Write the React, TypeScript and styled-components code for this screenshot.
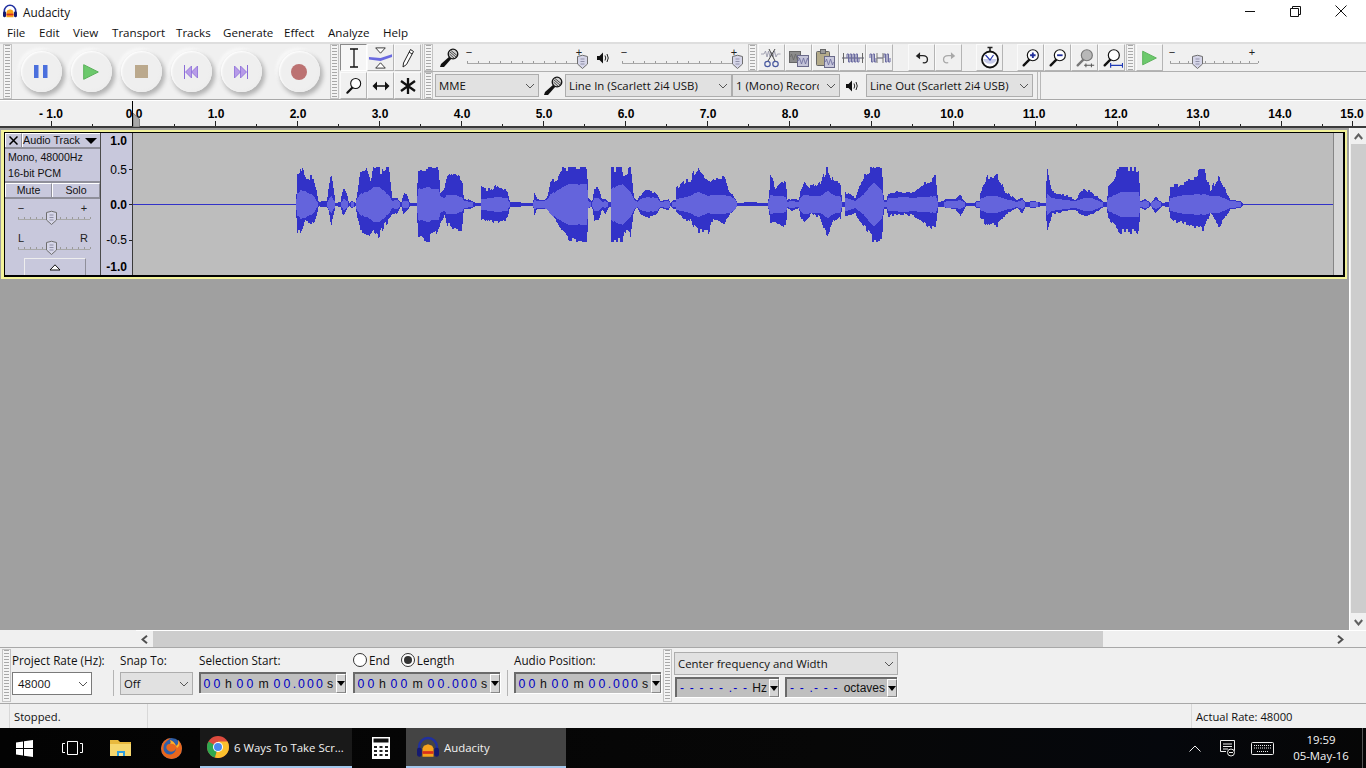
import React from "react";
import styled, { createGlobalStyle } from "styled-components";

const ui = `"Open Sans", "Noto Sans", sans-serif`;
const arial = `"Liberation Sans", Arial, sans-serif`;

const Global = createGlobalStyle`
  html, body { margin: 0; padding: 0; width: 1366px; height: 768px; overflow: hidden; background: #f0f0f0; }
  * { box-sizing: border-box; }
`;

const Page = styled.div`
  width: 1366px; height: 768px; display: flex; flex-direction: column;
  font-family: ${ui}; font-size: 11.4px; color: #111; background: #f0f0f0; overflow: hidden;
`;

/* ---------- title and menu ---------- */
const TitleBar = styled.div`
  height: 22px; flex: none; background: #fff; display: flex; align-items: center; padding-left: 3px;
`;
const TitleText = styled.span`
  margin-left: 6px; font-size: 11.8px; color: #111; margin-top: 1px;
`;
const WinControls = styled.div`
  margin-left: auto; display: flex; height: 22px; align-items: center; padding-right: 19px; gap: 34px;
`;
const MenuBar = styled.div`
  height: 20px; flex: none; background: #fff; display: flex; align-items: center; padding-left: 7px;
`;
const MenuItem = styled.span<{ $w: number }>`
  width: ${p => p.$w}px; font-size: 11.6px; white-space: nowrap;
`;

/* ---------- toolbars ---------- */
const Dock = styled.div`
  height: 58px; flex: none; display: flex; background: #f0f0f0;
  border-top: 2px solid #dedede; border-bottom: 1px solid #a8a8a8;
`;
const Grip = styled.div`
  flex: none; width: 9px; height: 100%; border: 1px solid #c4c4c4; background-color: #f4f4f4;
  background-image: repeating-linear-gradient(to bottom, #a8a8a8 0 1px, transparent 1px 3px);
  background-size: 5px 100%; background-repeat: no-repeat; background-position: center;
`;
const Transport = styled.div`
  flex: none; width: 312px; display: flex; align-items: center; padding-left: 3px; height: 100%;
`;
const RoundCell = styled.div<{ $gap?: number }>`
  width: 50px; height: 50px; flex: none; margin-left: ${p => p.$gap ?? 0}px; display: flex; align-items: center; justify-content: center;
`;
const RoundButton = styled.div`
  width: 41px; height: 41px; border-radius: 50%; background: radial-gradient(circle at 45% 45%, #efefef 60%, #e8e8e8 100%);
  box-shadow: 2px 3px 4px 1px #b4b4b4, -2px -2px 3px 1px #f9f9f9, inset 1px 1px 2px #fff;
  display: flex; align-items: center; justify-content: center;
`;
const ToolSection = styled.div`
  flex: none; display: flex; height: 100%; margin-left: 6px;
`;
const ToolGrid = styled.div`
  margin-left: 1px; width: 83px; display: grid; grid-template-columns: repeat(3, 27px); grid-auto-rows: 27px; gap: 1px 0; align-content: start;
  border-right: 1px solid #c8c8c8;
`;
const IconBtn = styled.div<{ $down?: boolean }>`
  width: 27px; height: 27px; flex: none; display: flex; align-items: center; justify-content: center;
  background: ${p => (p.$down ? "#f6f6f6" : "#f0f0f0")};
  border-top: 1px solid ${p => (p.$down ? "#8a8a8a" : "#fafafa")};
  border-left: 1px solid ${p => (p.$down ? "#8a8a8a" : "#fafafa")};
  border-right: 1px solid ${p => (p.$down ? "#fff" : "#b4b4b4")};
  border-bottom: 1px solid ${p => (p.$down ? "#fff" : "#b4b4b4")};
`;
const Rows = styled.div`
  flex: 1; display: flex; flex-direction: column; margin-left: 1px;
`;
const Row = styled.div<{ $line?: boolean }>`
  height: ${p => (p.$line ? 28 : 27)}px; flex: none; display: flex; align-items: center;
  border-bottom: ${p => (p.$line ? "1px solid #b0b0b0" : "none")};
`;
const Gap = styled.div<{ $w: number }>`
  width: ${p => p.$w}px; flex: none;
`;
const Combo = styled.div<{ $w: number; $h?: number; $white?: boolean }>`
  width: ${p => p.$w}px; height: ${p => p.$h ?? 23}px; flex: none; display: flex; align-items: center; position: relative;
  padding: 0 16px 0 3px; background: ${p => (p.$white ? "#fff" : "#e1e1e1")};
  border: 1px solid ${p => (p.$white ? "#7a7a7a" : "#adadad")}; font-size: 11.4px;
  overflow: hidden; white-space: nowrap;
`;
const ComboArrow = styled.div`
  position: absolute; right: 0; top: 0; bottom: 0; width: 20px; padding-left: 3px; display: flex; align-items: center; justify-content: center;
  background: inherit;
`;
const DoubleBar = styled.div`
  width: 4px; height: 27px; flex: none; border-left: 1px solid #b8b8b8; border-right: 1px solid #b8b8b8;
`;

/* ---------- ruler ---------- */
const Ruler = styled.div`
  height: 28px; flex: none; position: relative; background: #f0f0f0; border-top: 1px solid #fff; border-bottom: 2px solid #3a3a3a;
`;
const RulerLabel = styled.span`
  position: absolute; top: 6px; transform: translateX(-50%); font: bold 12px ${arial}; color: #000; white-space: nowrap;
`;
const Tick = styled.i<{ $major?: boolean }>`
  position: absolute; bottom: 0; width: 1px; height: ${p => (p.$major ? 5 : 2)}px; background: #222;
`;
const PlayLine = styled.i`
  position: absolute; left: 132px; top: 0; bottom: 0; width: 1px; background: #000;
`;
const PlayMark = styled.svg`
  position: absolute; left: 133px; top: 12px;
`;

/* ---------- track ---------- */
const Workspace = styled.div`
  flex: 1; min-height: 0; display: flex; background: #a0a0a0;
`;
const TrackLane = styled.div`
  flex: 1; padding: 2px 0 0 1px;
`;
const TrackFrame = styled.div`
  width: 1346px; height: 149px; background: #f3f39a; padding: 2px 2px 2px 3px;
`;
const TrackInner = styled.div`
  height: 100%; display: flex; border: solid #000; border-width: 1px 2px 2px 1px; background: #bdbdbd;
`;
const TrackPanel = styled.div`
  width: 96px; flex: none; display: flex; flex-direction: column; background: #c8c8dc; font: 11px ${arial}; color: #111;
  border-right: 1px solid #4a4a4a;
`;
const PanelHeader = styled.div`
  height: 16px; flex: none; display: flex; border-bottom: 2px solid #8f8f9a;
`;
const CloseBox = styled.div`
  width: 17px; flex: none; display: flex; align-items: center; justify-content: center; border-right: 1px solid #8f8f9a;
  border-left: 1px solid #fff; border-top: 1px solid #fff;
`;
const TrackName = styled.div`
  flex: 1; display: flex; align-items: center; padding-bottom: 2px; font-size: 10.8px; border-top: 1px solid #fff; border-left: 1px solid #fff;
`;
const Caret = styled.div`
  margin: 2px 3px 0 auto; width: 0; height: 0;
  border-left: 6px solid transparent; border-right: 6px solid transparent; border-top: 6px solid #000;
`;
const PanelInfo = styled.div`
  height: 34px; flex: none; padding: 0 0 0 3px; line-height: 16px; border-bottom: 2px solid #8f8f9a;
  font-size: 10.6px;
`;
const MuteRow = styled.div`
  height: 16px; flex: none; display: flex; border-bottom: 2px solid #8f8f9a;
`;
const MuteBtn = styled.div<{ $w: number }>`
  width: ${p => p.$w}px; flex: none; display: flex; align-items: center; justify-content: center; font-size: 10.6px; padding-bottom: 1px;
  border-left: 1px solid #fff; border-top: 1px solid #fff; border-right: 1px solid #8f8f9a;
`;
const SliderStack = styled.div`
  flex: 1; min-height: 0; display: flex; flex-direction: column; align-items: flex-start; padding-left: 10px; padding-top: 4px; gap: 6px;
`;
const Collapse = styled.div`
  margin: -5px 0 0 9px; width: 62px; height: 17px; flex: none; display: flex; align-items: center; justify-content: center;
  border: 1px solid #eee; border-bottom: 0; border-right-color: #8f8f9a;
`;
const VRuler = styled.div`
  width: 32px; flex: none; position: relative; background: #c8c8dc; border-right: 1px solid #3a3a3a; font: 12px ${arial}; color: #000;
`;
const VLabel = styled.span<{ $y: number; $bold?: boolean }>`
  position: absolute; right: 5px; top: ${p => p.$y}px; line-height: 14px; font-weight: ${p => (p.$bold ? 700 : 400)};
  font-size: 12px;
`;
const VTick = styled.i<{ $y: number }>`
  position: absolute; right: 0; top: ${p => p.$y}px; width: 3px; height: 1px; background: #222;
`;
const WaveBox = styled.div`
  flex: 1; position: relative; background: #bdbdbd;
`;
const WaveSvg = styled.svg`
  position: absolute; left: 0; top: 0; display: block;
`;
const EndStrip = styled.div`
  width: 10px; flex: none; background: #d6d6d6; border-left: 1px solid #858585;
`;

const VScroll = styled.div`
  width: 17px; flex: none; background: #f0f0f0; border-left: 1px solid #fff; display: flex; flex-direction: column; align-items: center;
`;
const VArrow = styled.div`
  height: 16px; flex: none; width: 100%; display: flex; align-items: center; justify-content: center;
`;
const VThumb = styled.div`
  width: 15px; height: 469px; flex: none; background: #cdcdcd;
`;
const VSpace = styled.div`
  flex: 1;
`;

const HScrollRow = styled.div`
  height: 17px; flex: none; display: flex; background: #f0f0f0; border-top: 1px solid #f0f0f0;
`;
const HLeft = styled.div`
  width: 136px; flex: none; background: #f0f0f0;
`;
const HBar = styled.div`
  flex: 1; display: flex; align-items: center; border-top: 1px solid #fff; margin-top: -1px; height: 17px;
`;
const HArrow = styled.div`
  width: 17px; flex: none; height: 100%; display: flex; align-items: center; justify-content: center;
`;
const HThumb = styled.div`
  width: 950px; height: 100%; background: #cdcdcd;
`;

/* ---------- selection bar ---------- */
const SelectionBar = styled.div`
  height: 57px; flex: none; display: flex; align-items: stretch; background: #f0f0f0;
  border-top: 1px solid #a8a8a8; border-bottom: 1px solid #a8a8a8; padding: 1px 0 1px 2px;
`;
const FieldGroup = styled.div<{ $w: number; $gap?: number }>`
  width: ${p => p.$w}px; flex: none; margin-left: ${p => p.$gap ?? 0}px; display: flex; flex-direction: column;
`;
const FieldLabel = styled.div`
  height: 23px; flex: none; display: flex; align-items: center; font-size: 11.7px; white-space: nowrap; padding-bottom: 1px;
`;
const VSep = styled.div`
  width: 1px; height: 26px; flex: none; background: #b4b4b4; align-self: flex-end; margin-bottom: 6px;
`;
const RadioLine = styled.div`
  height: 23px; flex: none; display: flex; align-items: center; padding-bottom: 1px; font-size: 11.7px;
`;
const Radio = styled.span<{ $on?: boolean }>`
  width: 14px; height: 14px; border: 1px solid #333; border-radius: 50%; background: #fff; display: inline-flex; align-items: center; justify-content: center;
  margin-right: 2px; &::after { content: ""; width: 8px; height: 8px; border-radius: 50%; background: ${p => (p.$on ? "#333" : "transparent")}; }
`;
const TimeBox = styled.div<{ $w: number; $h?: number }>`
  width: ${p => p.$w}px; height: ${p => p.$h ?? 21}px; flex: none; display: flex; align-items: center; background: #bfbfbf;
  border: solid; border-width: 2px 0 0 2px; border-color: #6a6a6a; box-shadow: 1px 1px 0 #fff; padding-left: 1px;
  font: 12px ${arial}; overflow: hidden;
`;
const TimeCell = styled.span<{ $w: number; $blue?: boolean }>`
  width: ${p => p.$w}px; flex: none; text-align: center; white-space: nowrap; color: ${p => (p.$blue ? "#0000c4" : "#111")}; font-size: 12.3px;
`;
const DashCell = styled.span<{ $w: number }>`
  width: ${p => p.$w}px; flex: none; padding-left: 2px; white-space: nowrap; color: #0000c4; font-size: 12px; letter-spacing: 1.200px;
`;
const TimeUnit = styled.span`
  margin-left: auto; margin-right: 2px; color: #111; font-size: 12px;
`;
const TimeDrop = styled.div`
  width: 10px; align-self: stretch; flex: none; background: #d4d4d4; border: 1px solid #8a8a8a; border-right-color: #777; border-top-color: #fff; border-left-color: #fff;
  display: flex; align-items: center; justify-content: center;
  &::after { content: ""; border-left: 4px solid transparent; border-right: 4px solid transparent; border-top: 5px solid #000; }
`;
const SpectralCol = styled.div`
  width: 226px; flex: none; margin-left: 2px; display: flex; flex-direction: column; padding-top: 3px; gap: 2px;
`;
const SpectralRow = styled.div`
  display: flex; padding-left: 1px; gap: 6px;
`;

/* ---------- status ---------- */
const StatusBar = styled.div`
  height: 24px; flex: none; display: flex; align-items: center; background: #f0f0f0; font-size: 11.2px;
`;
const StatusCell = styled.div<{ $w?: number; $line?: boolean }>`
  width: ${p => (p.$w ? p.$w + "px" : "auto")}; flex: ${p => (p.$w ? "none" : "1")}; height: 100%; display: flex; align-items: center; padding-left: 4px;
  border-left: ${p => (p.$line ? "1px solid #d8d8d8" : "none")};
`;

/* ---------- taskbar ---------- */
const Taskbar = styled.div`
  height: 40px; flex: none; display: flex; color: #fff;
  background: linear-gradient(90deg, #030303 0%, #070707 60%, #05070c 85%, #060606 100%);
`;
const TaskCell = styled.div<{ $w: number; $active?: boolean; $open?: boolean; $gap?: number }>`
  width: ${p => p.$w}px; flex: none; margin-left: ${p => p.$gap ?? 0}px; height: 100%; display: flex; align-items: center;
  justify-content: ${p => (p.$open || p.$active ? "flex-start" : "center")}; padding-left: ${p => (p.$open || p.$active ? 7 : 0)}px;
  background: ${p => (p.$active ? "#444" : p.$open ? "#191919" : "transparent")};
  border-bottom: ${p => (p.$active || p.$open ? "2px solid #a3c7ec" : "none")};
`;
const TaskLabel = styled.span`
  margin-left: 5px; font-size: 11.4px; white-space: nowrap; color: #f2f2f2;
`;
const Tray = styled.div`
  margin-left: auto; display: flex; height: 100%; align-items: center;
`;
const TrayCell = styled.div<{ $w: number }>`
  width: ${p => p.$w}px; flex: none; display: flex; align-items: center; justify-content: center;
`;
const Clock = styled.div`
  width: 82px; flex: none; text-align: center; font-size: 11.4px; line-height: 16px; color: #f5f5f5;
`;
const ShowDesk = styled.div`
  width: 4px; height: 100%; flex: none; border-left: 1px solid #555;
`;

/* ---------- drawings ---------- */
const Chevron = ({ color = "#555" }: { color?: string }) => (
  <svg width="10" height="6" viewBox="0 0 10 6"><path d="M1 1l4 4 4-4" fill="none" stroke={color} strokeWidth="1" /></svg>
);

const Thumb = ({ x, y }: { x: number; y: number }) => (
  <g transform={`translate(${x} ${y})`}>
    <path d="M.5 1.500q5-2.500 10 0V9l-5 4.500-5-4.500z" fill="#d5d5e8" stroke="#6e6e6e" />
    <path d="M3.500 4h4M3.500 6.500h4M3.500 9h4" stroke="#9090a8" fill="none" />
  </g>
);

type SliderProps = { width: number; height?: number; end: number; thumb: number; plus: number; minus?: number; lineY: number; n: number; left?: string; right?: string };
const Slider = ({ width, height = 26, end, thumb, plus, minus = 5, lineY, n, left = "−", right = "+" }: SliderProps) => {
  const ticks = Array.from({ length: n + 1 }, (_, i) => 3 + Math.round((i * (end - 3)) / n));
  return (
    <svg width={width} height={height} viewBox={`0 0 ${width} ${height}`} style={{ display: "block", flex: "none" }}>
      <path d={`M3 ${lineY + 0.5}H${end}`} stroke="#a8a8a8" />
      <path d={ticks.map(t => `M${t + 0.5} ${lineY - 2}v2`).join("")} stroke="#9a9a9a" />
      <text x={minus} y={lineY - 7} fontSize="11" fontFamily={arial} fill="#222" textAnchor="middle">{left}</text>
      <text x={plus} y={lineY - 7} fontSize="11" fontFamily={arial} fill="#222" textAnchor="middle">{right}</text>
      <Thumb x={thumb} y={lineY - 8} />
    </svg>
  );
};

const Mic = () => (
  <svg width="20" height="20" viewBox="0 0 20 20">
    <path d="M1 19l1-3 9-8 2 2-8 9z" fill="#111" />
    <circle cx="14" cy="6" r="4.800" fill="#d0d0d0" stroke="#111" strokeWidth="1.300" />
    <path d="M11 4l6 5M12 2.500l6 5M10.500 6l5 4.500" stroke="#111" strokeWidth=".7" />
  </svg>
);
const Speaker = () => (
  <svg width="15" height="14" viewBox="0 0 15 14">
    <path d="M1 5h2.500L7 1.500v11L3.500 9H1z" fill="#111" />
    <path d="M9 4.500q1.500 2.500 0 5M11 3q2.500 4 0 8" stroke="#222" fill="none" />
  </svg>
);
const Magnifier = ({ color = "#111", glass = "#fff", children, size = 22 }: { color?: string; glass?: string; children?: React.ReactNode; size?: number }) => (
  <svg width={size} height={size} viewBox="0 0 24 24">
    <path d="M4 20l7-7" stroke={color} strokeWidth="2.600" strokeLinecap="round" />
    <circle cx="14" cy="9" r="6" fill={glass} stroke={color} strokeWidth="1.300" />
    {children}
  </svg>
);
const Wavelet = ({ x, y, w = 10, c = "#7a7a90" }: { x: number; y: number; w?: number; c?: string }) => {
  let d = `M${x} ${y}`;
  for (let i = 0; i < w; i += 2) d += `l1 ${i % 4 === 0 ? -3 : 3}l1 ${i % 4 === 0 ? 3 : -3}`;
  return <path d={d} stroke={c} strokeWidth=".8" fill="none" />;
};
const CutIcon = () => (
  <svg width="24" height="24" viewBox="0 0 24 24">
    <path d="M1 8h3l1.500-3 1.500 6 1.500-6 1.500 6 1.500-5 1.500 5 1.500-6 1.500 6 1.500-3h3" stroke="#9a9aac" strokeWidth=".9" fill="none" />
    <path d="M15 3L8 15M9 3l6 12" stroke="#444" strokeWidth="1" fill="none" />
    <circle cx="7.500" cy="18" r="2.700" fill="none" stroke="#4a5aa0" strokeWidth="1.200" />
    <circle cx="15.500" cy="18" r="2.700" fill="none" stroke="#4a5aa0" strokeWidth="1.200" />
  </svg>
);
const CopyIcon = () => (
  <svg width="24" height="24" viewBox="0 0 24 24">
    <rect x="2.500" y="5.500" width="11" height="11" fill="#8c8c8c" stroke="#666" />
    <rect x="10.500" y="9.500" width="11" height="11" fill="#c4c4d8" stroke="#6a6a8a" />
    <Wavelet x={11.500} y={15} w={9} c="#6a6a9a" />
    <Wavelet x={3.500} y={11} w={7} c="#666" />
  </svg>
);
const PasteIcon = () => (
  <svg width="24" height="24" viewBox="0 0 24 24">
    <rect x="2.500" y="5.500" width="13" height="14" rx="1" fill="#b4ab8a" stroke="#666" />
    <rect x="6.500" y="3.500" width="5" height="4" fill="#999" stroke="#666" />
    <rect x="10.500" y="10.500" width="10" height="11" fill="#c8c8dc" stroke="#6a6a8a" />
    <Wavelet x={11.500} y={16} w={8} c="#6a6a9a" />
  </svg>
);
const TrimIcon = () => (
  <svg width="24" height="24" viewBox="0 0 24 24">
    <path d="M1 12h22" stroke="#55556a" />
    <path d="M2.500 7v10M21.500 7v10" stroke="#666" />
    <path d="M6 12V8h1.500v8H9V8h1.500v8H12V8h1.500v8H15V8h1.500v8H18v-4" fill="none" stroke="#6a6aa0" />
  </svg>
);
const SilenceIcon = () => (
  <svg width="24" height="24" viewBox="0 0 24 24">
    <path d="M9 12h6" stroke="#55556a" />
    <path d="M2 12V8h1.500v8H5V8h1.500v8H8v-4M16 12V8h1.500v8H19V8h1.500v8H22v-4" fill="none" stroke="#6a6aa0" />
    <path d="M9 7v10M15 7v10" stroke="#777" />
  </svg>
);
const UndoIcon = ({ off, flip }: { off?: boolean; flip?: boolean }) => (
  <svg width="16" height="14" viewBox="0 0 20 18" style={{ transform: flip ? "scaleX(-1)" : undefined }}>
    <path d="M6 6h5q6 0 6 5t-6 4" fill="none" stroke={off ? "#a8a8a8" : "#222"} strokeWidth="1.700" />
    <path d="M7.500 1.500L2 6.500l5.500 4z" fill={off ? "#a8a8a8" : "#222"} />
  </svg>
);
const Stopwatch = () => (
  <svg width="22" height="24" viewBox="0 0 22 24">
    <path d="M8.500 1.500h5M11 1.500V5" stroke="#222" strokeWidth="1.600" />
    <circle cx="11" cy="13.500" r="8" fill="#fff" stroke="#111" strokeWidth="1.800" />
    <path d="M4 13a7.500 7.500 0 0 0 14 0" fill="#c8cce8" />
    <path d="M6.500 9L11 14l3.500-5" stroke="#2a3ab0" strokeWidth="1.200" fill="none" />
  </svg>
);
const PlayTri = ({ w = 16, h = 16, fill = "#6cc96c", stroke = "#5ab05a" }: { w?: number; h?: number; fill?: string; stroke?: string }) => (
  <svg width={w} height={h} viewBox="0 0 16 16"><path d="M.7.700L15.300 8 .7 15.300z" fill={fill} stroke={stroke} /></svg>
);

const TransportIcon = {
  pause: <svg width="14" height="13" viewBox="0 0 14 13"><path d="M0 0h4.500v13H0zM9 0h4.500v13H9z" fill="#4b70dd" /></svg>,
  play: <PlayTri />,
  stop: <svg width="13" height="13"><rect width="13" height="13" fill="#bba98d" /></svg>,
  back: (
    <svg width="14" height="14" viewBox="0 0 14 14">
      <path d="M.5 0v14" stroke="#8a6cd8" /><path d="M7.500 1L1.500 7l6 6zM13.500 1l-6 6 6 6z" fill="#b79be8" stroke="#8a6cd8" strokeWidth=".8" />
    </svg>
  ),
  fwd: (
    <svg width="14" height="14" viewBox="0 0 14 14">
      <path d="M13.500 0v14" stroke="#8a6cd8" /><path d="M6.500 1l6 6-6 6zM.5 1l6 6-6 6z" fill="#b79be8" stroke="#8a6cd8" strokeWidth=".8" />
    </svg>
  ),
  rec: <svg width="16" height="16"><circle cx="8" cy="8" r="8" fill="#bc7272" /></svg>,
};

const AudacityLogo = ({ s = 14 }: { s?: number }) => (
  <svg width={s} height={s} viewBox="0 0 16 16">
    <path d="M1.500 10V8a6.500 6.500 0 0 1 13 0v2" fill="none" stroke="#2030a0" strokeWidth="1.800" />
    <rect x="0" y="8.500" width="3.500" height="6.500" rx="1.500" fill="#151a70" />
    <rect x="12.500" y="8.500" width="3.500" height="6.500" rx="1.500" fill="#151a70" />
    <path d="M4 15V9l1-2 3-1 3 1 1 2v6z" fill="#f7a31c" />
    <path d="M4 11h8v2H4z" fill="#d8301c" />
  </svg>
);

/* ---------- waveform data: [x in reference, up, down, inner half height] ---------- */
type K = [number, number, number, number];
const A: K[] = [
  [0,1,1,1],[15,1,1,1],[18,10,12,5],[20,31,26,10],[30,36,28,13],[45,27,16,13],[70,26,18,8],[78,14,11,3],[85,1,1,1],[92,3,2,1],[110,3,2,1],[115,20,6,5],[122,30,20,8],[128,17,12,5],[135,1,1,1],[150,2,2,1],[155,12,8,3],[160,18,9,5],[170,10,4,3],[175,1,1,1],[185,3,3,2],[195,1,1,1],[200,10,11,6],[210,34,26,10],[225,36,26,12],[240,24,30,14],[250,36,26,17],[265,36,32,17],[280,31,21,13],[295,36,16,9],[305,6,9,3],[320,6,8,4],[332,1,1,1],[340,10,9,3],[350,9,6,3],[358,1,1,1],[378,1,1,1],[384,37,34,15],[410,37,36,17],[445,37,23,14],[450,10,18,8],[462,14,10,6],[470,26,19,9],[490,31,23,9],[515,24,24,7],[520,5,4,3],[540,4,4,2],[555,1,1,1],[570,1,1,1],[572,16,14,5],[600,14,16,6],[620,19,18,7],[650,14,14,6],[658,2,2,1],[680,2,2,1],[700,1,1,1],[728,1,1,1],[732,12,9,4],[740,5,4,3],[760,4,4,3],[770,7,4,4],[780,22,9,10],[800,26,16,13],[820,36,28,18],[840,37,36,20],[890,37,37,20],[893,7,3,3],[905,2,2,1],[912,16,16,6],[925,16,14,6],[935,4,4,2],[945,5,8,3],[955,2,2,1],[960,2,2,1],[962,36,36,15],[995,36,37,20],[1000,30,26,18],[1020,36,29,12],[1030,7,6,5],[1040,3,2,2],[1050,9,9,5],[1070,16,13,7],[1100,9,9,6],[1110,3,3,2],[1135,5,5,3],[1140,1,1,1],[1150,4,4,2],[1155,4,4,2],[1157,17,8,5],[1185,22,14,7],[1200,24,16,8],[1220,36,26,12],[1240,27,26,10],[1255,21,26,8],[1270,26,14,9],[1300,27,18,9],[1320,11,8,8],[1335,5,4,4],[1340,1,1,1],[1380,2,1,1],[1420,1,1,1],[1432,1,1,1],[1436,8,8,5],
];
const B: K[] = [
  [0,30,18,9],[15,16,16,8],[35,24,21,8],[47,21,23,7],[50,4,3,2],[65,5,6,3],[85,4,3,2],[90,12,11,6],[100,21,18,9],[125,17,8,8],[150,21,13,8],[170,36,31,13],[190,21,16,9],[210,21,13,7],[215,2,2,1],[222,2,2,1],[225,12,11,6],[255,6,9,3],[280,27,21,10],[310,36,36,22],[335,36,36,13],[340,4,4,2],[350,4,4,2],[352,11,11,6],[400,12,9,7],[430,12,11,6],[460,21,19,7],[495,26,23,8],[503,2,2,1],[520,3,2,1],[527,5,3,3],[555,5,4,3],[570,9,11,4],[587,1,1,1],[610,1,1,1],[620,3,3,2],[628,3,3,2],[630,12,14,5],[650,27,19,8],[680,29,21,8],[705,12,9,5],[740,4,3,2],[755,6,8,4],[765,2,2,1],[790,3,3,2],[815,1,1,1],[825,1,1,1],[830,36,29,10],[845,12,9,6],[885,9,6,4],[915,4,5,3],[940,16,11,6],[965,11,9,6],[1000,2,2,1],[1010,2,2,1],[1012,16,14,6],[1050,36,26,12],[1105,36,28,12],[1110,3,3,2],[1125,5,5,3],[1140,1,1,1],[1155,7,8,4],[1175,1,1,1],[1195,2,2,1],[1200,16,14,6],[1240,21,18,9],[1300,34,24,10],[1320,14,8,8],[1345,27,21,8],[1380,4,4,3],[1410,3,3,2],[1415,1,1,1],[1440,1,1,1],
];
const keys: K[] = [
  ...A.map(k => [290 + k[0] / 3, k[1], k[2], k[3]] as K),
  ...B.map(k => [770 + k[0] / 3, k[1], k[2], k[3]] as K),
];

const noise = (x: number, seed: number) => {
  const v = Math.sin(x * 12.9898 + seed * 78.233) * 43758.5453;
  return v - Math.floor(v) - 0.5;
};

const buildWave = () => {
  const ORIGIN = 133, TOP = 133, MID = 204;
  let outer = "", inner = "";
  let j = 0;
  for (let x = 296; x < 1243; x++) {
    while (j < keys.length - 2 && keys[j + 1][0] < x) j++;
    const a = keys[j], b = keys[j + 1];
    const t = Math.max(0, Math.min(1, (x - a[0]) / (b[0] - a[0] || 1)));
    const coarse = Math.floor(x / 2);
    const lerp = (i: 1 | 2 | 3) => a[i] + (b[i] - a[i]) * t;
    const jit = (amp: number, s: number) => (amp > 4 ? amp * 0.24 * noise(coarse, s) : 0);
    const up = Math.min(37, Math.round(lerp(1) + jit(lerp(1), 1)));
    const dn = Math.min(37, Math.round(lerp(2) + jit(lerp(2), 2)));
    const inn = Math.round(lerp(3) + lerp(3) * 0.08 * noise(coarse, 3));
    const px = x - ORIGIN, py = MID - TOP;
    outer += `M${px} ${py - up}h1v${up + dn + 1}h-1z`;
    const iu = Math.min(inn, up), id = Math.min(inn, dn);
    if (iu + id > 2) inner += `M${px} ${py - iu}h1v${iu + id + 1}h-1z`;
  }
  return { outer, inner };
};
const wave = buildWave();

const Waveform = () => (
  <WaveSvg width="1200" height="143" viewBox="0 0 1200 143" shapeRendering="crispEdges">
    <rect x="0" y="71" width="1200" height="1" fill="#3232c8" />
    <path d={wave.outer} fill="#3232c8" />
    <path d={wave.inner} fill="#6464dc" />
  </WaveSvg>
);

const Time = () => (
  <>
    <TimeCell $w={10} $blue>0</TimeCell><TimeCell $w={10} $blue>0</TimeCell><TimeCell $w={13}>h</TimeCell>
    <TimeCell $w={10} $blue>0</TimeCell><TimeCell $w={10} $blue>0</TimeCell><TimeCell $w={17}>m</TimeCell>
    <TimeCell $w={10} $blue>0</TimeCell><TimeCell $w={10} $blue>0</TimeCell><TimeCell $w={5} $blue>.</TimeCell>
    <TimeCell $w={9} $blue>0</TimeCell><TimeCell $w={9} $blue>0</TimeCell><TimeCell $w={9} $blue>0</TimeCell>
    <TimeCell $w={12}>s</TimeCell>
    <TimeDrop />
  </>
);

const menu: [string, number][] = [["File", 32], ["Edit", 34], ["View", 39], ["Transport", 64], ["Tracks", 47], ["Generate", 61], ["Effect", 44], ["Analyze", 55], ["Help", 30]];

const ruler = Array.from({ length: 17 }, (_, i) => i - 1);
const label = (n: number) => (n < 0 ? "- 1.0" : n.toFixed(1));
const labelX = (n: number) => (n === 15 ? 1352 : n < 0 ? 51 : n >= 10 ? 132 + n * 82 : 134 + n * 82);
const tickX = (n: number) => (n === 15 ? 1352 : 133 + n * 82);

export default function App() {
  return (
    <Page>
      <Global />
      <TitleBar>
        <AudacityLogo />
        <TitleText>Audacity</TitleText>
        <WinControls>
          <svg width="11" height="11"><path d="M0 5.500h10" stroke="#111" /></svg>
          <svg width="11" height="11"><path d="M.5 2.500h8v8h-8zM2.500 2.500v-2h8v8h-2" fill="none" stroke="#111" /></svg>
          <svg width="12" height="12"><path d="M.5.500l11 11M11.500.500l-11 11" stroke="#111" /></svg>
        </WinControls>
      </TitleBar>
      <MenuBar>
        {menu.map(([m, w]) => <MenuItem key={m} $w={w}>{m}</MenuItem>)}
      </MenuBar>

      <Dock>
        <Gap $w={3} />
        <Grip />
        <Transport>
          <Gap $w={1} />
          <RoundCell><RoundButton>{TransportIcon.pause}</RoundButton></RoundCell>
          <RoundCell><RoundButton>{TransportIcon.play}</RoundButton></RoundCell>
          <RoundCell><RoundButton>{TransportIcon.stop}</RoundButton></RoundCell>
          <RoundCell><RoundButton>{TransportIcon.back}</RoundButton></RoundCell>
          <RoundCell><RoundButton>{TransportIcon.fwd}</RoundButton></RoundCell>
          <RoundCell $gap={8}><RoundButton>{TransportIcon.rec}</RoundButton></RoundCell>
        </Transport>
        <ToolSection>
          <Grip />
          <ToolGrid>
            <IconBtn $down>
              <svg width="14" height="20" viewBox="0 0 14 20"><path d="M3 1h8M3 19h8M7 1v18" stroke="#111" strokeWidth="1.300" fill="none" /></svg>
            </IconBtn>
            <IconBtn>
              <svg width="26" height="24" viewBox="0 0 26 24">
                <path d="M8 1.500h10L13 7zM8 22.500h10L13 17z" fill="#fff" stroke="#222" strokeWidth=".9" />
                <path d="M1 11l12 1 12-4v3L13 15 1 13.500z" fill="#6a6ae0" />
              </svg>
            </IconBtn>
            <IconBtn>
              <svg width="14" height="20" viewBox="0 0 14 20"><path d="M9.500 1.500l3 2-7 13-3.500 2.500.5-4z" fill="#fff" stroke="#222" /><path d="M8 4l3 2" stroke="#222" /></svg>
            </IconBtn>
            <IconBtn><Magnifier size={20} /></IconBtn>
            <IconBtn>
              <svg width="18" height="10" viewBox="0 0 18 10"><path d="M4 5h10" stroke="#111" strokeWidth="1.500" /><path d="M5 .5L.5 5 5 9.500zM13 .5L17.500 5 13 9.500z" fill="#111" /></svg>
            </IconBtn>
            <IconBtn>
              <svg width="16" height="16" viewBox="0 0 16 16"><path d="M8 0v16M1 3l14 10M15 3L1 13" stroke="#111" strokeWidth="2.300" /></svg>
            </IconBtn>
          </ToolGrid>
        </ToolSection>
        <Rows>
          <Row $line>
            <Grip />
            <Gap $w={6} /><Mic /><Gap $w={5} />
            <Slider width={126} end={113} thumb={113} plus={115} lineY={18} n={10} />
            <Gap $w={6} /><Speaker /><Gap $w={8} />
            <Slider width={126} end={113} thumb={113} plus={115} lineY={18} n={10} />
            <Gap $w={3} />
            <Grip />
            <Gap $w={1} />
            <IconBtn><CutIcon /></IconBtn>
            <IconBtn><CopyIcon /></IconBtn>
            <IconBtn><PasteIcon /></IconBtn>
            <IconBtn><TrimIcon /></IconBtn>
            <IconBtn><SilenceIcon /></IconBtn>
            <Gap $w={15} />
            <IconBtn><UndoIcon /></IconBtn>
            <IconBtn><UndoIcon off flip /></IconBtn>
            <Gap $w={14} />
            <IconBtn><Stopwatch /></IconBtn>
            <Gap $w={14} />
            <IconBtn>
              <Magnifier><path d="M11 9h6M14 6v6" stroke="#22309a" strokeWidth="2" /></Magnifier>
            </IconBtn>
            <IconBtn>
              <Magnifier><path d="M11 9h6" stroke="#22309a" strokeWidth="2" /></Magnifier>
            </IconBtn>
            <IconBtn>
              <Magnifier color="#777" glass="#b8b8b8"><path d="M11 20h11M13 18v4M19 18v4" stroke="#555" strokeWidth="1.100" /></Magnifier>
            </IconBtn>
            <IconBtn>
              <Magnifier><path d="M10.500 20h13M10.500 17.500v5M23.500 17.500v5" stroke="#1f3ab5" strokeWidth="1.300" /></Magnifier>
            </IconBtn>
            <Gap $w={1} />
            <Grip />
            <Gap $w={1} />
            <IconBtn><PlayTri w={15} h={16} /></IconBtn>
            <Gap $w={4} />
            <Slider width={96} end={91} thumb={25} plus={85} lineY={18} n={10} />
          </Row>
          <Row>
            <Grip />
            <Gap $w={2} />
            <Combo $w={104}>MME<ComboArrow><Chevron /></ComboArrow></Combo>
            <Gap $w={4} /><Mic /><Gap $w={2} />
            <Combo $w={167}>Line In (Scarlett 2i4 USB)<ComboArrow><Chevron /></ComboArrow></Combo>
            <Combo $w={108}>1 (Mono) Record<ComboArrow><Chevron /></ComboArrow></Combo>
            <Gap $w={5} /><Speaker /><Gap $w={6} />
            <Combo $w={167}>Line Out (Scarlett 2i4 USB)<ComboArrow><Chevron /></ComboArrow></Combo>
            <Gap $w={4} />
            <DoubleBar />
          </Row>
        </Rows>
      </Dock>

      <Ruler>
        {ruler.map(n => (
          <React.Fragment key={n}>
            <RulerLabel style={{ left: labelX(n) }}>{label(n)}</RulerLabel>
            <Tick $major style={{ left: tickX(n) }} />
            {n < 15 && <Tick style={{ left: tickX(n) + 41 }} />}
          </React.Fragment>
        ))}
        <PlayLine />
        <PlayMark width="7" height="14" viewBox="0 0 7 14"><path d="M0 0l6.500 6V14H0z" fill="#a8a8a8" stroke="#666" strokeWidth=".7" /></PlayMark>
      </Ruler>

      <Workspace>
        <TrackLane>
          <TrackFrame>
            <TrackInner>
              <TrackPanel>
                <PanelHeader>
                  <CloseBox>
                    <svg width="9" height="9"><path d="M.5.500l8 8M8.500.500l-8 8" stroke="#000" strokeWidth="1.500" /></svg>
                  </CloseBox>
                  <TrackName>Audio Track<Caret /></TrackName>
                </PanelHeader>
                <PanelInfo>Mono, 48000Hz<br />16-bit PCM</PanelInfo>
                <MuteRow>
                  <MuteBtn $w={47}>Mute</MuteBtn>
                  <MuteBtn $w={48}>Solo</MuteBtn>
                </MuteRow>
                <SliderStack>
                  <Slider width={78} height={24} end={75} thumb={31} minus={6} plus={69} lineY={16} n={12} />
                  <Slider width={78} height={24} end={75} thumb={31} minus={6} plus={69} lineY={16} n={12} left="L" right="R" />
                  <Collapse>
                    <svg width="12" height="7" viewBox="0 0 12 7"><path d="M6 .8L11 6H1z" fill="#fff" stroke="#111" /></svg>
                  </Collapse>
                </SliderStack>
              </TrackPanel>
              <VRuler>
                <VLabel $y={1} $bold>1.0</VLabel>
                <VLabel $y={30}>0.5</VLabel><VTick $y={36} />
                <VLabel $y={65} $bold>0.0</VLabel><VTick $y={71} />
                <VLabel $y={100}>-0.5</VLabel><VTick $y={107} />
                <VLabel $y={127} $bold>-1.0</VLabel>
              </VRuler>
              <WaveBox><Waveform /></WaveBox>
              <EndStrip />
            </TrackInner>
          </TrackFrame>
        </TrackLane>
        <VScroll>
          <VArrow>
            <svg width="9" height="7" viewBox="0 0 9 7"><path d="M.8 6L4.500 1.500 8.200 6" fill="none" stroke="#606060" strokeWidth="2" /></svg>
          </VArrow>
          <VThumb />
          <VSpace />
          <VArrow>
            <svg width="9" height="7" viewBox="0 0 9 7"><path d="M.8 1L4.500 5.500 8.200 1" fill="none" stroke="#606060" strokeWidth="2" /></svg>
          </VArrow>
        </VScroll>
      </Workspace>

      <HScrollRow>
        <HLeft />
        <HBar>
          <HArrow>
            <svg width="7" height="9" viewBox="0 0 7 9"><path d="M6 .8L1.500 4.500 6 8.200" fill="none" stroke="#505050" strokeWidth="2" /></svg>
          </HArrow>
          <HThumb />
          <VSpace />
          <HArrow>
            <svg width="7" height="9" viewBox="0 0 7 9"><path d="M1 .8L5.500 4.500 1 8.200" fill="none" stroke="#505050" strokeWidth="2" /></svg>
          </HArrow>
          <Gap $w={17} />
        </HBar>
      </HScrollRow>

      <SelectionBar>
        <Grip />
        <FieldGroup $w={101} $gap={1}>
          <FieldLabel>Project Rate (Hz):</FieldLabel>
          <Combo $w={80} $white style={{ paddingLeft: 5 }}>48000<ComboArrow><Chevron /></ComboArrow></Combo>
        </FieldGroup>
        <VSep />
        <FieldGroup $w={79} $gap={6}>
          <FieldLabel>Snap To:</FieldLabel>
          <Combo $w={73}>Off<ComboArrow><Chevron /></ComboArrow></Combo>
        </FieldGroup>
        <FieldGroup $w={154}>
          <FieldLabel>Selection Start:</FieldLabel>
          <TimeBox $w={147}><Time /></TimeBox>
        </FieldGroup>
        <FieldGroup $w={154}>
          <RadioLine>
            <Radio />End<Gap $w={11} /><Radio $on />Length
          </RadioLine>
          <TimeBox $w={147}><Time /></TimeBox>
        </FieldGroup>
        <VSep />
        <FieldGroup $w={149} $gap={6}>
          <FieldLabel>Audio Position:</FieldLabel>
          <TimeBox $w={147}><Time /></TimeBox>
        </FieldGroup>
        <Grip />
        <SpectralCol>
          <Combo $w={224} $h={23}>Center frequency and Width<ComboArrow><Chevron /></ComboArrow></Combo>
          <SpectralRow>
            <TimeBox $w={104} $h={20}>
              <DashCell $w={70}>- - - - - .- -</DashCell>
              <TimeUnit>Hz</TimeUnit>
              <TimeDrop />
            </TimeBox>
            <TimeBox $w={112} $h={20}>
              <DashCell $w={52}>- - .- - -</DashCell>
              <TimeUnit>octaves</TimeUnit>
              <TimeDrop />
            </TimeBox>
          </SpectralRow>
        </SpectralCol>
      </SelectionBar>

      <StatusBar>
        <Gap $w={9} />
        <StatusCell $w={138} $line>Stopped.</StatusCell>
        <StatusCell $line />
        <StatusCell $w={175} $line>Actual Rate: 48000</StatusCell>
      </StatusBar>

      <Taskbar>
        <TaskCell $w={48}>
          <svg width="17" height="17" viewBox="0 0 17 17"><path d="M0 2.400l7-1v6.600H0zM8 1.300L17 0v8H8zM0 9h7v6.600l-7-1zM8 9h9v8l-9-1.300z" fill="#fff" /></svg>
        </TaskCell>
        <TaskCell $w={48}>
          <svg width="21" height="14" viewBox="0 0 21 14" fill="none" stroke="#fff"><path d="M5.500.5h10v13h-10zM3 2.500H.5v9H3M18 2.500h2.500v9H18" /></svg>
        </TaskCell>
        <TaskCell $w={50}>
          <svg width="22" height="18" viewBox="0 0 22 18">
            <path d="M0 1h8l2 2h11v14H0z" fill="#e8b93e" />
            <path d="M0 5h21v12H0z" fill="#f6d76e" />
            <path d="M7 12h8v5H7z" fill="#2e9fe0" />
            <path d="M9 14h4v3H9z" fill="#fbe79a" />
          </svg>
        </TaskCell>
        <TaskCell $w={50}>
          <svg width="23" height="23" viewBox="0 0 23 23">
            <circle cx="11.500" cy="11.500" r="10.500" fill="#2f5fa8" />
            <path d="M11.500 1A10.500 10.500 0 1 0 22 11.500C22 8 20.500 5 18 3c1 3 0 5-2 6-1-3-3-5-6-6 1 2 1 3 0 4-3 0-4 2-3.500 4.500 1 2.500 3.500 3.500 6 3 2-.5 3-2 3.500-3-.5 4-3.500 6-6.500 6C6 17.500 3.500 14.500 3.500 11c0-5 4-8 8-10z" fill="#e8661c" />
            <path d="M18 3c1 3 0 5-2 6-1-3-3-5-6-6 1 2 1 3 0 4 3-1 6 1 7 4 3-2 3-5 1-8z" fill="#f8b12c" />
          </svg>
        </TaskCell>
        <TaskCell $w={152} $gap={4} $open>
          <svg width="22" height="22" viewBox="0 0 22 22">
            <circle cx="11" cy="11" r="11" fill="#dd4b3e" />
            <path d="M11 11L1.500 5.500A11 11 0 0 0 8 21.600z" fill="#2fa84f" />
            <path d="M11 11l-3 10.600A11 11 0 0 0 22 11 11 11 0 0 0 20.500 5.500H11z" fill="#fbc02d" />
            <circle cx="11" cy="11" r="5" fill="#fff" />
            <circle cx="11" cy="11" r="4" fill="#4a88ee" />
          </svg>
          <TaskLabel>6 Ways To Take Scr...</TaskLabel>
        </TaskCell>
        <TaskCell $w={54}>
          <Gap $w={4} />
          <svg width="18" height="22" viewBox="0 0 18 22">
            <rect width="18" height="22" fill="#fff" />
            <rect x="1.500" y="1.500" width="15" height="4" fill="#111" />
            <path d="M2 9h3v2H2zM7.500 9h3v2h-3zM13 9h3v2h-3zM2 13h3v2H2zM7.500 13h3v2h-3zM13 13h3v2h-3zM2 17h3v2H2zM7.500 17h3v2h-3zM13 17h3v2h-3z" fill="#222" />
          </svg>
        </TaskCell>
        <TaskCell $w={160} $active>
          <Gap $w={4} />
          <AudacityLogo s={22} />
          <TaskLabel>Audacity</TaskLabel>
        </TaskCell>
        <Tray>
          <TrayCell $w={34}>
            <svg width="12" height="7" viewBox="0 0 12 7"><path d="M.5 6.500L6 1l5.500 5.500" fill="none" stroke="#eee" /></svg>
          </TrayCell>
          <TrayCell $w={32}>
            <svg width="17" height="17" viewBox="0 0 17 17" fill="none" stroke="#eee">
              <path d="M.5.500h14v10H11M.5.500v11h5.500" />
              <path d="M3 4h9M3 6.500h9M3 9h5" />
              <circle cx="11" cy="12.500" r="3.500" fill="#060606" /><path d="M9 12.500h4" />
            </svg>
          </TrayCell>
          <TrayCell $w={36}>
            <svg width="23" height="13" viewBox="0 0 23 13" fill="none" stroke="#eee">
              <rect x=".5" y=".5" width="22" height="12" rx="1" />
              <path d="M3 3.500h17M3 6h17M6 9.500h11" strokeDasharray="1 1" />
            </svg>
          </TrayCell>
          <Clock>19:59<br />05-May-16</Clock>
          <ShowDesk />
        </Tray>
      </Taskbar>
    </Page>
  );
}
